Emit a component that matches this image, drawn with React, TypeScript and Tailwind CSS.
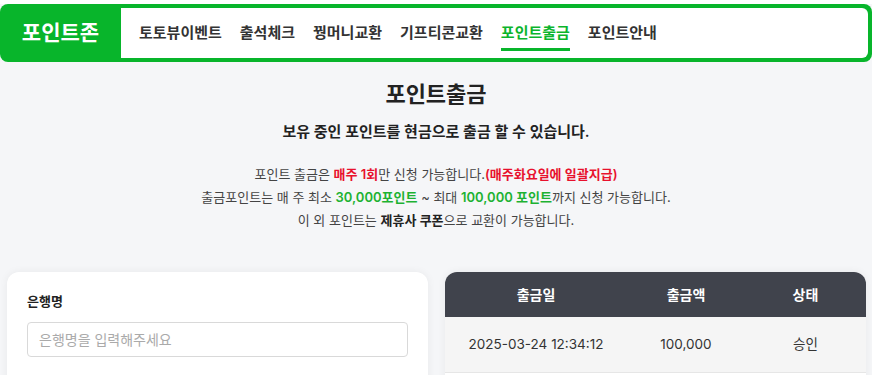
const NAV_ITEMS = ['토토뷰이벤트', '출석체크', '꿩머니교환', '기프티콘교환', '포인트출금', '포인트안내']

const HISTORY = [{ date: '2025-03-24 12:34:12', amount: '100,000', status: '승인' }]

function Header() {
  return (
    <header className="mt-1 flex h-[58px] rounded-lg bg-[#08b52b] p-1 pl-0">
      <div className="flex w-[121px] shrink-0 items-center justify-center text-[21px] font-bold text-white">
        포인트존
      </div>
      <nav className="flex flex-1 items-center gap-[18px] rounded-r-md bg-white pl-[18px]">
        {NAV_ITEMS.map((item) => {
          const active = item === '포인트출금'
          return (
            <a
              key={item}
              href="#"
              className={
                active
                  ? 'relative text-[15px] font-semibold text-[#0bb52c] after:absolute after:left-0 after:right-0 after:top-[26px] after:h-[3px] after:bg-[#08b52b]'
                  : 'text-[15px] font-semibold text-[#333]'
              }
            >
              {item}
            </a>
          )
        })}
      </nav>
    </header>
  )
}

function Notice() {
  return (
    <section className="text-center">
      <h1 className="mt-[16px] text-[22px] leading-[33px] font-bold text-[#222]">포인트출금</h1>
      <p className="mt-[10px] text-[15px] leading-[22px] font-semibold text-[#222]">
        보유 중인 포인트를 현금으로 출금 할 수 있습니다.
      </p>
      <div className="mt-[20px] text-[13px] leading-[23px] text-[#444]">
        <p>
          포인트 출금은 <span className="font-semibold text-[#e8112d]">매주 1회</span>만 신청 가능합니다.
          <span className="font-semibold text-[#e8112d]">(매주화요일에 일괄지급)</span>
        </p>
        <p>
          출금포인트는 매 주 최소 <span className="font-semibold text-[#1db232]">30,000포인트</span> ~ 최대{' '}
          <span className="font-semibold text-[#1db232]">100,000 포인트</span>까지 신청 가능합니다.
        </p>
        <p>
          이 외 포인트는 <span className="font-semibold text-[#222]">제휴사 쿠폰</span>으로 교환이 가능합니다.
        </p>
      </div>
    </section>
  )
}

export default function App() {
  return (
    <div
      className="min-h-screen bg-[#f5f6f8]"
      style={{ fontFamily: "Inter, 'Noto Sans CJK KR', sans-serif" }}
    >
      <Header />
      <Notice />

      <main className="mt-[40px] grid grid-cols-2 gap-[17px] px-[7px] pr-[6px] pb-10">
        <div className="min-h-[160px] rounded-xl bg-white px-5 pt-[19px] pb-10 shadow-[0_0_8px_rgba(0,0,0,0.06)]">
          <label className="block text-[13px] leading-5 font-semibold text-[#222]">은행명</label>
          <input
            placeholder="은행명을 입력해주세요"
            className="mt-[11px] h-[35px] w-full rounded-[4px] border border-[#d9d9d9] px-[11px] text-[14px] text-[#333] placeholder:text-[#aaa] focus:outline-none"
          />
        </div>

        <div className="self-start overflow-hidden rounded-xl bg-white shadow-[0_0_8px_rgba(0,0,0,0.06)]">
          <div className="grid h-[45px] grid-cols-[182px_118px_1fr] items-center bg-[#40434c] text-center text-[14px] font-bold text-white">
            <span>출금일</span>
            <span>출금액</span>
            <span>상태</span>
          </div>
          {HISTORY.map((row) => (
            <div
              key={row.date}
              className="grid h-[56px] grid-cols-[182px_118px_1fr] items-center border-b border-[#e6e6e6] bg-[#f5f5f5] text-center text-[13.5px] text-[#333]"
            >
              <span>{row.date}</span>
              <span>{row.amount}</span>
              <span>{row.status}</span>
            </div>
          ))}
          <div className="h-10 bg-white" />
        </div>
      </main>
    </div>
  )
}
